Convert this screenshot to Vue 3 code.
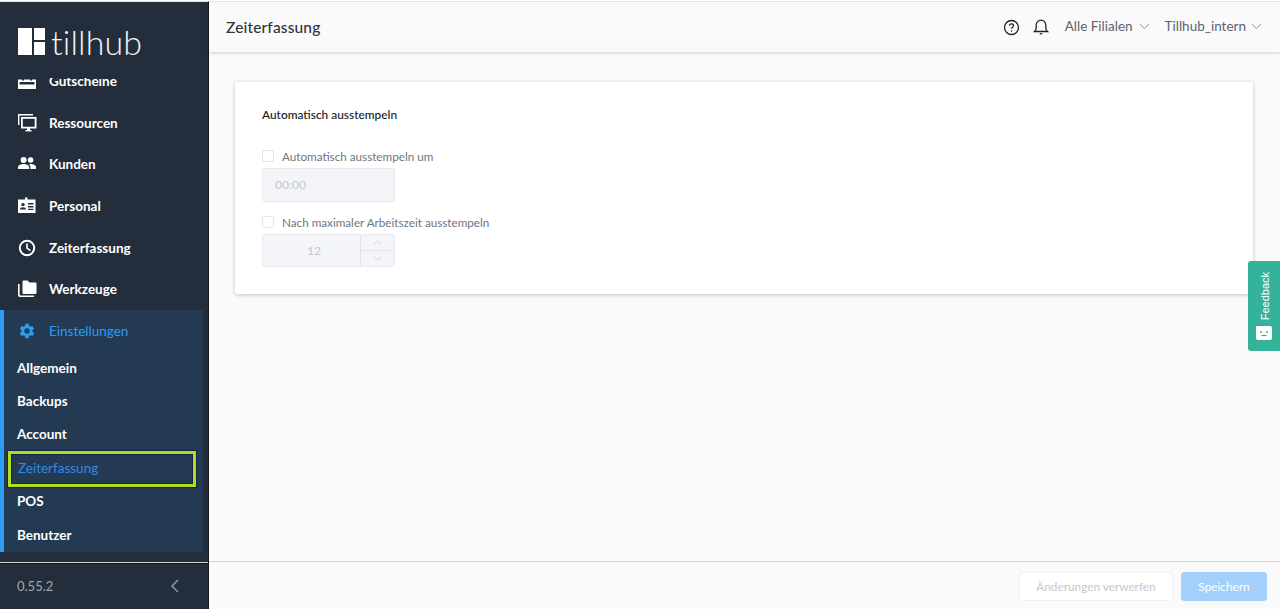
<script setup>
const items = [
  { label: 'Gutscheine', icon: 'voucher' },
  { label: 'Ressourcen', icon: 'monitor' },
  { label: 'Kunden', icon: 'people' },
  { label: 'Personal', icon: 'badge' },
  { label: 'Zeiterfassung', icon: 'clock' },
  { label: 'Werkzeuge', icon: 'folder' }
]
const subItems = ['Allgemein', 'Backups', 'Account', 'Zeiterfassung', 'POS', 'Benutzer']
</script>

<template>
  <div class="app">
    <aside class="sidebar">
      <div class="logo">
        <svg class="logo-mark" width="27" height="27" viewBox="0 0 27 27">
          <rect x="0" y="0" width="14" height="27" fill="#fff" />
          <rect x="16" y="0" width="11" height="12" fill="#fff" />
          <rect x="16" y="14" width="11" height="13" fill="#fff" />
        </svg>
        <span class="logo-text">tillhub</span>
      </div>
      <nav class="nav">
        <a v-for="item in items" :key="item.label" class="nav-item">
          <svg class="nav-icon" width="20" height="20" viewBox="0 0 20 20" fill="#fff">
            <g v-if="item.icon === 'voucher'">
              <path fill-rule="evenodd" d="M1 8.500h4v1h2v-1h6v1h2v-1h4V18H1z M2.500 11v2.500h15V11z" />
            </g>
            <g v-else-if="item.icon === 'monitor'">
              <path d="M1 1h15v1.400H2.400V12H1z" />
              <path d="M4 4h15.500v11.500H13v1.600h1.500v1.500H8.500v-1.500H10v-1.600H4z M5.800 5.800v7.900h11.900V5.800z" fill-rule="evenodd" />
            </g>
            <g v-else-if="item.icon === 'people'">
              <circle cx="6.600" cy="6" r="3" />
              <circle cx="13.600" cy="6" r="2.800" />
              <path d="M1 15v-1.800c0-2 3.400-3.200 5.600-3.200s5.600 1.200 5.600 3.200V15z" />
              <path d="M13.400 15v-2c0-1.100-.5-2-1.400-2.700.6-.2 1.200-.3 1.700-.3 2.200 0 5.300 1.100 5.300 3V15z" />
            </g>
            <g v-else-if="item.icon === 'badge'">
              <path d="M1 3.500h7V1.500h2.500v2h8v13.500H1z M3 13.500h6c0-1.500-1.400-2.300-3-2.300s-3 .8-3 2.300z M11 7v1.400h5.500V7z M11 10v1.400h5.500V10z M11 12.700v1.200h5.500v-1.200z" fill-rule="evenodd" />
              <circle cx="6" cy="8.600" r="1.700" fill="#232d3b" />
            </g>
            <g v-else-if="item.icon === 'clock'">
              <path d="M10 1.800a8.200 8.200 0 1 1 0 16.400 8.200 8.200 0 0 1 0-16.400z M10 3.800a6.200 6.200 0 1 0 0 12.400 6.200 6.200 0 0 0 0-12.400z" fill-rule="evenodd" />
              <path d="M9.200 5.500h1.600v4.300l3 2.200-.9 1.300-3.700-2.700z" />
            </g>
            <g v-else>
              <path d="M5.500 2.500a1 1 0 0 1 1-1h4l2 2h6a1 1 0 0 1 1 1V14a1 1 0 0 1-1 1H6.500a1 1 0 0 1-1-1z" />
              <path d="M1 5h1.600v10.500a1.100 1.100 0 0 0 1.100 1.100H17V18H3a2 2 0 0 1-2-2z" />
            </g>
          </svg>
          <span>{{ item.label }}</span>
        </a>
        <div class="group">
          <a class="nav-item active">
            <svg class="nav-icon" width="20" height="20" viewBox="0 0 24 24" fill="#2d9cf5">
              <path fill-rule="evenodd" d="M19.400 13a7.500 7.500 0 0 0 0-2l2.100-1.600-2-3.500-2.500 1a7.500 7.500 0 0 0-1.700-1L15 3.200h-4l-.4 2.700a7.500 7.500 0 0 0-1.700 1l-2.500-1-2 3.500L6.500 11a7.500 7.500 0 0 0 0 2l-2.100 1.600 2 3.500 2.500-1a7.500 7.500 0 0 0 1.700 1l.4 2.700h4l.4-2.700a7.500 7.500 0 0 0 1.700-1l2.500 1 2-3.500zM13 15.200a3.200 3.200 0 1 1 0-6.400 3.200 3.200 0 0 1 0 6.400z" transform="translate(-1 0)" />
            </svg>
            <span>Einstellungen</span>
          </a>
          <a v-for="sub in subItems" :key="sub" class="sub-item" :class="{ current: sub === 'Zeiterfassung' }">{{ sub }}</a>
        </div>
      </nav>
      <div class="sidebar-footer">
        <span class="version">0.55.2</span>
        <svg width="12" height="14" viewBox="0 0 12 14" fill="none" stroke="#9aa2ac" stroke-width="1.300">
          <path d="M9 1 3 7l6 6" />
        </svg>
      </div>
    </aside>

    <div class="main">
      <header class="topbar">
        <h1>Zeiterfassung</h1>
        <div class="top-actions">
          <svg width="17" height="17" viewBox="0 0 17 17" fill="none" stroke="#222" stroke-width="1.300">
            <circle cx="8.500" cy="8.500" r="7" />
            <path d="M6.500 6.800c0-1.200 1-1.900 2-1.900s2 .7 2 1.800c0 1.500-2 1.500-2 3" />
            <circle cx="8.500" cy="12" r=".8" fill="#222" stroke="none" />
          </svg>
          <svg class="bell" width="16" height="18" viewBox="0 0 16 18" fill="none" stroke="#222" stroke-width="1.300">
            <path d="M1.500 13.500c1.200-1 1.700-2 1.700-4V7a4.800 4.800 0 0 1 9.600 0v2.500c0 2 .5 3 1.700 4z" />
            <path d="M6.800 15.800h2.400" />
          </svg>
          <button class="drop first">Alle Filialen
            <svg width="11" height="7" viewBox="0 0 11 7" fill="none" stroke="#8d929c" stroke-width="1"><path d="m.8 1 4.700 4.600L10.200 1" /></svg>
          </button>
          <button class="drop last">Tillhub_intern
            <svg width="11" height="7" viewBox="0 0 11 7" fill="none" stroke="#8d929c" stroke-width="1"><path d="m.8 1 4.700 4.600L10.200 1" /></svg>
          </button>
        </div>
      </header>

      <main class="content">
        <section class="card">
          <h2>Automatisch ausstempeln</h2>
          <label class="check"><span class="box"></span>Automatisch ausstempeln um</label>
          <div class="field time">00:00</div>
          <label class="check second"><span class="box"></span>Nach maximaler Arbeitszeit ausstempeln</label>
          <div class="field number">
            <span class="num-value">12</span>
            <span class="steppers">
              <span class="step">
                <svg width="9" height="5" viewBox="0 0 9 5" fill="none" stroke="#d3d6dc" stroke-width="1"><path d="m1 4 3.500-3L8 4" /></svg>
              </span>
              <span class="step">
                <svg width="9" height="5" viewBox="0 0 9 5" fill="none" stroke="#d3d6dc" stroke-width="1"><path d="m1 1 3.500 3L8 1" /></svg>
              </span>
            </span>
          </div>
        </section>
      </main>

      <footer class="actions">
        <button class="btn discard">Änderungen verwerfen</button>
        <button class="btn save">Speichern</button>
      </footer>

      <div class="feedback">
        <span class="feedback-text">Feedback</span>
        <svg width="16" height="14" viewBox="0 0 16 14">
          <path d="M0 0h14a2 2 0 0 1 2 2v10a2 2 0 0 1-2 2H2a2 2 0 0 1-2-2z" fill="#fff" />
          <circle cx="5" cy="6" r="1" fill="#35b39a" />
          <circle cx="11" cy="6" r="1" fill="#35b39a" />
          <path d="M5.500 9.500h5" stroke="#35b39a" stroke-width="1.200" />
        </svg>
      </div>
    </div>
  </div>
</template>

<style>
html, body { margin: 0; padding: 0; background: #fafafa; }
</style>

<style scoped>
.app {
  display: flex;
  height: 609px;
  overflow: hidden;
  font-family: Lato, "Liberation Sans", sans-serif;
  background: #fafafa;
  border-top: 1px solid #fff;
  box-sizing: border-box;
}
.sidebar {
  width: 209px;
  flex: none;
  display: flex;
  flex-direction: column;
  background: #232d3b;
  border-top: 1px solid #e4e4e4;
  border-right: 1px solid #14181e;
  box-sizing: border-box;
  color: #fff;
}
.logo {
  height: 76px;
  flex: none;
  display: flex;
  align-items: flex-start;
  padding: 26px 0 0 18px;
  box-sizing: border-box;
}
.logo-text {
  font-size: 34px;
  line-height: 27px;
  font-weight: 300;
  margin-left: 6px;
  color: #f2f4f5;
  letter-spacing: .1px;
}
.nav {
  flex: 1;
  min-height: 0;
  overflow: hidden;
  display: flex;
  flex-direction: column;
  justify-content: flex-end;
  padding-right: 5px;
  padding-bottom: 10px;
}
.nav-item {
  height: 41.600px;
  flex: none;
  display: flex;
  align-items: center;
  padding-left: 17px;
  font-size: 13.500px;
  font-weight: 700;
  color: #fff;
}
.nav-icon {
  margin-right: 12px;
  flex: none;
}
.group {
  flex: none;
  background: #243a52;
  border-left: 4px solid #2d9cf5;
  height: 242px;
  box-sizing: border-box;
}
.group .nav-item {
  padding-left: 13px;
  height: 41px;
}
.nav-item.active { color: #2d9cf5; font-weight: 400; }
.sub-item {
  display: flex;
  align-items: center;
  height: 33.400px;
  padding-left: 13px;
  font-size: 13.500px;
  font-weight: 700;
  color: #fff;
}
.sub-item.current {
  color: #2d8ae8;
  font-weight: 400;
  margin: 0 0 -2px 4px;
  width: 188px;
  height: 35.400px;
  box-sizing: border-box;
  border: 3px solid #b3dd1e;
  box-shadow: 0 0 0 1px #14284e, inset 0 0 0 1px #14284e;
  padding: 0 0 2px 7px;
  position: relative;
}
.sidebar-footer {
  height: 47px;
  flex: none;
  border-top: 1px solid #d4d4d4;
  box-shadow: inset 0 1px 0 #12161c;
  display: flex;
  align-items: center;
  justify-content: space-between;
  padding: 0 27px 0 17px;
  box-sizing: border-box;
}
.version { font-size: 13px; color: #a3a8af; }
.main {
  position: relative;
  flex: 1;
  min-width: 0;
  display: flex;
  flex-direction: column;
}
.topbar {
  height: 51px;
  flex: none;
  display: flex;
  align-items: center;
  justify-content: space-between;
  background: #fafafa;
  border-top: 1px solid #e4e4e4;
  box-shadow: 0 1px 3px rgba(0, 0, 0, .18);
  padding: 0 18px 0 17px;
  box-sizing: border-box;
}
h1 {
  margin: 0;
  font-size: 15.500px;
  font-weight: 500;
  color: #30353c;
  letter-spacing: .15px;
}
.top-actions {
  display: flex;
  align-items: center;
}
.bell { margin-left: 13px; }
.drop {
  display: flex;
  align-items: center;
  gap: 6px;
  border: 0;
  background: none;
  padding: 0 0 2px;
  margin-left: 15px;
  font: inherit;
  font-size: 13.500px;
  color: #5c6370;
}
.drop.first { margin-left: 16px; }
.drop.last { gap: 5px; }
.content {
  flex: 1;
  padding: 30px 27px 0 26px;
  min-height: 0;
}
.card {
  height: 212px;
  background: #fff;
  border-radius: 3px;
  box-shadow: 0 1px 4px rgba(0, 0, 0, .22);
  padding: 25px 27px 0;
  box-sizing: border-box;
}
h2 {
  margin: 0 0 24px;
  font-size: 11.900px;
  line-height: 16px;
  font-weight: 500;
  color: #15181d;
}
.check {
  display: flex;
  align-items: center;
  height: 18px;
  font-size: 11.700px;
  color: #6f7580;
}
.check.second { margin-top: 11px; }
.box {
  width: 10px;
  height: 10px;
  border: 1px solid #e4e6ea;
  border-radius: 2px;
  margin-right: 8px;
  background: #fff;
}
.field {
  width: 133px;
  height: 33.500px;
  margin-top: 3px;
  box-sizing: border-box;
  border: 1px solid #e8eaef;
  border-radius: 3px;
  background: #f4f5f9;
  color: #c4c7cd;
  font-size: 12px;
  display: flex;
  align-items: center;
}
.time { padding-left: 12px; }
.num-value { flex: 1; text-align: center; padding-left: 5px; }
.steppers {
  width: 33px;
  height: 100%;
  border-left: 1px solid #e2e4e9;
  display: flex;
  flex-direction: column;
}
.step {
  flex: 1;
  display: flex;
  align-items: center;
  justify-content: center;
}
.step + .step { border-top: 1px solid #e2e4e9; }
.actions {
  height: 48px;
  flex: none;
  box-sizing: border-box;
  border-top: 1px solid #d4d4d4;
  display: flex;
  justify-content: flex-end;
  align-items: center;
  gap: 8px;
  padding: 2px 13px 0 0;
  background: #fafafa;
}
.btn {
  height: 29px;
  border-radius: 3px;
  font: inherit;
  font-size: 11.800px;
  padding: 0;
}
.discard {
  width: 154px;
  background: #fff;
  border: 1px solid #f0f0f2;
  color: #c4c7cd;
}
.save {
  width: 86px;
  background: #a3d0fb;
  border: 1px solid #a3d0fb;
  color: #fff;
}
.feedback {
  position: absolute;
  right: 0;
  top: 260px;
  width: 32px;
  height: 90px;
  background: #35b39a;
  border-radius: 3px 0 0 3px;
  display: flex;
  flex-direction: column;
  align-items: center;
  justify-content: center;
  gap: 6px;
}
.feedback-text {
  writing-mode: vertical-rl;
  transform: rotate(180deg);
  font-family: "Liberation Sans", Arial, sans-serif;
  font-size: 11px;
  color: #fff;
  padding-right: 1px;
}
</style>
